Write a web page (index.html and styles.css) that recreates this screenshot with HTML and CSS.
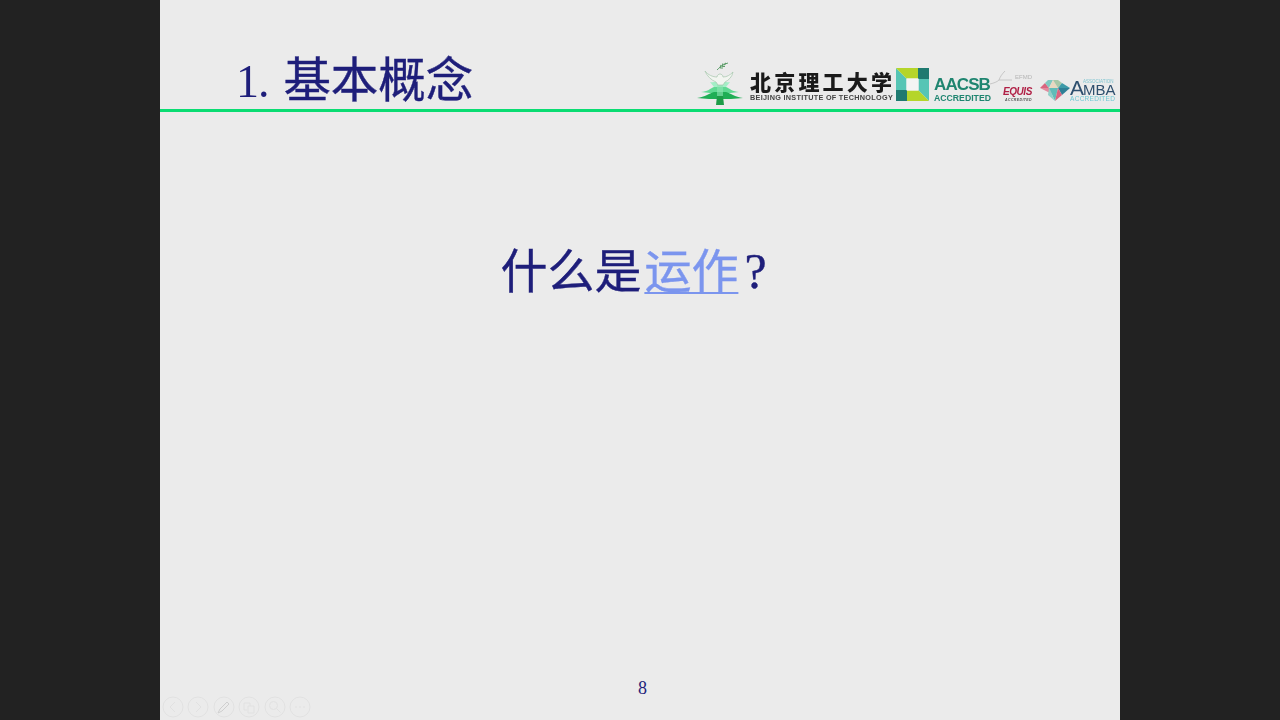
FILE: index.html
```html
<!DOCTYPE html>
<html lang="zh">
<head>
<meta charset="utf-8">
<title>基本概念</title>
<link rel="stylesheet" href="styles.css">
</head>
<body>
<main class="slide">
  <header class="head">
    <h1 class="title"><span class="num">1.</span> 基本概念</h1>
    <div class="logos">
      <svg class="bit-mark" width="46" height="44" viewBox="2 2 46 44">
        <path d="M18 18h14l-3 5H21z" fill="#d6f5e2"/>
        <path d="M15 22c4 1 7-1 10-1s6 2 10 1l-4 5H19z" fill="#a4eec6"/>
        <path d="M6 32c6 0 10-4 13-5h12c3 1 7 5 13 5l-9 1H15z" fill="#5fd992"/>
        <path d="M2 38c8-1 13-5 17-6h12c4 1 9 5 17 6l-12 1H14z" fill="#1fae55"/>
        <path d="M22 19h6v20h-6z" fill="#8fe4b4" opacity=".6"/>
        <path d="M22 36h6l1 9h-8z" fill="#1d9c48"/>
        <path d="M10 11c3 4 8 6 12 6 0-2 2-3 3-3s3 1 3 3c4 0 7-2 10-5-1 5-4 8-8 10l-2 3h-5l-2-3c-5-2-9-6-11-11z" fill="#f2f5f0" stroke="#a5c6ac" stroke-width=".7"/>
        <path d="M22 10c2-2 6-6 11-7" fill="none" stroke="#5f9e6b" stroke-width="1"/>
        <path d="M25 8l1-3M27 6.500l1-3M29 5l2-2M25 8l3 0M27 6.500l3 0" stroke="#5f9e6b" stroke-width="1.100"/>
      </svg>
      <div class="bit-words">
        <div class="bit-cn">北京理工大学</div>
        <div class="bit-en">BEIJING INSTITUTE OF TECHNOLOGY</div>
      </div>
      <svg class="aacsb-mark" width="33" height="33" viewBox="0 0 33 33">
        <path d="M0 0l10.500 10.500v12H0z" fill="#56c5b5"/>
        <path d="M0 22h11v11H0z" fill="#1f7a70"/>
        <path d="M0 0h22v10.500H10.500z" fill="#b5d52a"/>
        <path d="M22 0h11v11H22z" fill="#1f7a70"/>
        <path d="M22.500 11H33v22L22.500 22.500z" fill="#56c5b5"/>
        <path d="M11 22.500h11.500L33 33H11z" fill="#b5d52a"/>
        <path d="M10.500 10.500h12v12h-12z" fill="#f4f4f4"/>
      </svg>
      <div class="aacsb">
        <div class="aacsb-name">AACSB</div>
        <div class="aacsb-sub">ACCREDITED</div>
      </div>
      <div class="equis">
        <svg class="equis-swoosh" width="22" height="15" viewBox="0 0 22 15">
          <path d="M0 14c4-1 7-2 9-4M9 10c1-3 3-6 6-9M9 10h13" fill="none" stroke="#bdbdbd" stroke-width=".8"/>
        </svg>
        <div class="equis-efmd">EFMD</div>
        <div class="equis-name">EQUIS</div>
        <div class="equis-sub">ACCREDITED</div>
      </div>
      <svg class="amba-mark" width="30" height="21" viewBox="0 0 30 21">
        <path d="M0 8l5-5 4 5z" fill="#d9657f"/>
        <path d="M5 3l3-3h5L9 8z" fill="#7fc8c0"/>
        <path d="M13 0l-4 8h9z" fill="#e8d8c0"/>
        <path d="M13 0h5l4 3-4 5z" fill="#a8c8a8"/>
        <path d="M22 3l8 5H18z" fill="#3d9aa8"/>
        <path d="M0 8h9l3 6z" fill="#e28a9e"/>
        <path d="M9 8h9l-3 13z" fill="#5fbcb8"/>
        <path d="M9 8l6 13-7-6z" fill="#8fd0c8"/>
        <path d="M18 8h12l-8 7z" fill="#2f7f96"/>
        <path d="M18 8l4 7-7 6z" fill="#d9657f"/>
      </svg>
      <div class="amba">
        <div class="amba-top">
          <div class="amba-a">A</div>
          <div class="amba-right">
            <div class="amba-assoc">ASSOCIATION</div>
            <div class="amba-name">MBA</div>
          </div>
        </div>
        <div class="amba-sub">ACCREDITED</div>
      </div>
    </div>
  </header>
  <section class="body">
    <p class="question">什么是<a class="term" href="#">运作</a><span class="mark">?</span></p>
  </section>
  <footer class="page">8</footer>
  <nav class="tools">
    <span class="tool"><svg width="22" height="22" viewBox="0 0 22 22"><circle cx="11" cy="11" r="10"/><path d="M13 6l-5 5 5 5"/></svg></span>
    <span class="tool"><svg width="22" height="22" viewBox="0 0 22 22"><circle cx="11" cy="11" r="10"/><path d="M9 6l5 5-5 5"/></svg></span>
    <span class="tool"><svg width="22" height="22" viewBox="0 0 22 22"><circle cx="11" cy="11" r="10"/><path class="pen" d="M5 17l2-4 7-7 2 2-7 7z"/></svg></span>
    <span class="tool"><svg width="22" height="22" viewBox="0 0 22 22"><circle cx="11" cy="11" r="10"/><path d="M6 7h6v3M6 7v7h3M10 10h6v7h-6z"/></svg></span>
    <span class="tool"><svg width="22" height="22" viewBox="0 0 22 22"><circle cx="11" cy="11" r="10"/><circle cx="9.500" cy="9.500" r="4"/><path d="M12.500 12.500l4 4"/></svg></span>
    <span class="tool"><svg width="22" height="22" viewBox="0 0 22 22"><circle cx="11" cy="11" r="10"/><path d="M6 11h2M10 11h2M14 11h2"/></svg></span>
  </nav>
</main>
</body>
</html>
```
FILE: styles.css
```css
html, body { margin: 0; height: 100%; }
body {
  background: #222222;
  display: flex;
  justify-content: center;
  overflow: hidden;
  font-family: "Liberation Sans", "Noto Sans CJK SC", sans-serif;
}
.slide {
  position: relative;
  width: 960px;
  height: 720px;
  background: #ebebeb;
  display: flex;
  flex-direction: column;
}
.head {
  height: 109px;
  border-bottom: 3px solid #0adc72;
  display: flex;
  align-items: flex-end;
  justify-content: space-between;
  padding-left: 76px;
  padding-right: 4px;
}
.title {
  margin: 0;
  font-family: "Liberation Serif", "Noto Sans CJK SC", serif;
  font-weight: 400;
  font-size: 47.500px;
  line-height: 54px;
  color: #1e1e7a;
  white-space: nowrap;
  -webkit-text-stroke: 0.4px #1e1e7a;
  filter: blur(0.3px);
}
.num { font-size: 46px; letter-spacing: -1px; margin-right: 3px; -webkit-text-stroke: 0; }
.logos {
  display: flex;
  align-items: flex-end;
  padding-bottom: 3px;
  filter: blur(0.35px);
}
.bit-mark { margin-right: 7px; }
.bit-words { margin-right: 3px; margin-bottom: 4px; width: 143px; }
.bit-cn {
  font-family: "Noto Sans CJK SC", sans-serif;
  font-weight: 900;
  font-size: 21px;
  line-height: 24px;
  letter-spacing: 3.200px;
  color: #1a1a1a;
  white-space: nowrap;
}
.bit-en {
  font-size: 7.250px;
  line-height: 9px;
  font-weight: 700;
  color: #444;
  white-space: nowrap;
  letter-spacing: .3px;
}
.aacsb-mark { margin-bottom: 5px; margin-right: 5px; }
.aacsb { width: 57px; margin-bottom: 4px; color: #1f8570; font-weight: 700; }
.aacsb-name { font-size: 17px; line-height: 18px; letter-spacing: -.9px; }
.aacsb-sub { font-size: 8.700px; line-height: 8px; white-space: nowrap; }
.equis {
  position: relative;
  width: 47px;
  margin-bottom: 4px;
  text-align: right;
  padding-right: 6px;
  box-sizing: border-box;
}
.equis-swoosh { position: absolute; left: -1px; top: -4px; }
.equis-efmd { font-size: 6px; line-height: 7px; color: #b5b5b5; }
.equis-name { font-size: 10px; line-height: 12px; font-style: italic; font-weight: 700; letter-spacing: -.4px; color: #b01f45; padding-top: 5px; }
.equis-sub { font-size: 3.500px; line-height: 4px; font-style: italic; font-weight: 700; color: #555; letter-spacing: .4px; }
.amba-mark { margin-left: 2px; margin-bottom: 5px; }
.amba { width: 46px; margin-bottom: 4px; color: #2e4f6e; }
.amba-top { display: flex; align-items: flex-end; }
.amba-a { font-size: 21px; line-height: 17px; width: 13px; }
.amba-assoc { font-size: 4.500px; line-height: 5px; color: #7fc4d0; white-space: nowrap; }
.amba-name { font-size: 15px; line-height: 12px; }
.amba-sub { font-size: 6.500px; line-height: 6px; color: #6fc8d4; letter-spacing: .3px; white-space: nowrap; }
.body {
  flex: 1;
  display: flex;
  justify-content: center;
  padding-top: 132px;
  padding-right: 13px;
}
.question {
  margin: 0;
  font-size: 47px;
  line-height: 56px;
  color: #1e1e7a;
  white-space: nowrap;
  -webkit-text-stroke: 0.4px #1e1e7a;
  filter: blur(0.3px);
}
.term {
  margin-left: 3px;
  color: #7b95ee;
  -webkit-text-stroke: 0.4px #7b95ee;
  text-decoration: underline;
  text-decoration-thickness: 2px;
  text-decoration-skip-ink: none;
  text-underline-offset: 4px;
}
.mark { margin-left: 6px; font-family: "Liberation Serif", serif; font-size: 50px; line-height: 50px; }
.page {
  text-align: center;
  font-family: "Liberation Serif", serif;
  font-size: 18px;
  line-height: 22px;
  color: #1e1e7a;
  padding-left: 5px;
  padding-bottom: 21px;
}
.tools {
  position: absolute;
  left: 2px;
  bottom: 2px;
  display: flex;
  gap: 3.400px;
  filter: blur(0.4px);
}
.tool { display: block; width: 22px; height: 22px; }
.tool svg { display: block; fill: none; stroke: #e1e1e1; stroke-width: 1; }
.tool .pen { stroke: #cfcfcf; }
```
